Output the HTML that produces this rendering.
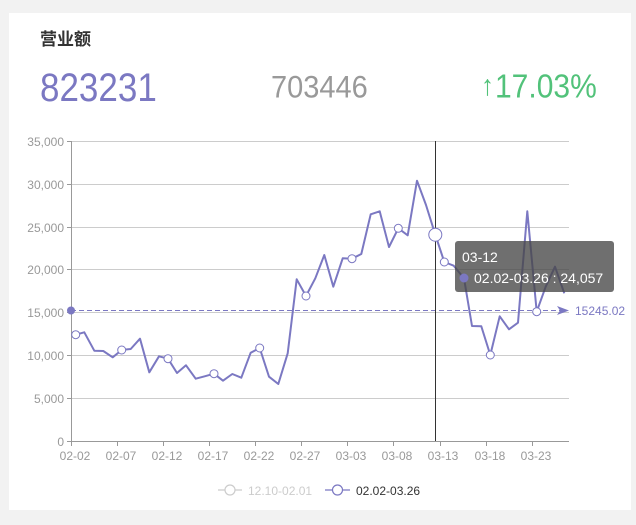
<!DOCTYPE html>
<html><head><meta charset="utf-8"><style>
body{margin:0;width:636px;height:525px;background:#f2f2f2;font-family:"Liberation Sans","Noto Sans CJK SC",sans-serif;overflow:hidden;position:relative}
.card{position:absolute;left:9px;top:13px;width:622px;height:497px;background:#fff}
.t{position:absolute;left:40px;top:25px;font-size:17px;font-weight:bold;color:#333}
.n{position:absolute;white-space:nowrap;line-height:1;transform-origin:0 0}
</style></head><body>
<div class="card"></div>
<div class="t">营业额</div>
<div class="n" style="left:40px;top:68px;font-size:35px;transform:scaleY(1.13);color:#7b78c2">823231</div>
<div class="n" style="left:271px;top:72px;font-size:29px;transform:scaleY(1.1);color:#999">703446</div>
<div class="n" style="left:481px;top:71px;font-size:30px;transform:scaleY(1.1);color:#52c27a"><span style="font-size:26px;position:relative;top:-2px;margin-right:1px">↑</span>17.03%</div>
<svg width="636" height="525" style="position:absolute;left:0;top:0" font-family="Liberation Sans, sans-serif">
<g stroke="#ccc" stroke-width="1">
<line x1="71" x2="569" y1="141.5" y2="141.5"/><line x1="71" x2="569" y1="184.5" y2="184.5"/><line x1="71" x2="569" y1="227.5" y2="227.5"/><line x1="71" x2="569" y1="269.5" y2="269.5"/><line x1="71" x2="569" y1="312.5" y2="312.5"/><line x1="71" x2="569" y1="355.5" y2="355.5"/><line x1="71" x2="569" y1="398.5" y2="398.5"/>
</g>
<g stroke="#999" stroke-width="1"><line x1="71.5" y1="141" x2="71.5" y2="441"/><line x1="71" y1="441.5" x2="569" y2="441.5"/>
<line x1="67" x2="71" y1="141.5" y2="141.5"/><line x1="67" x2="71" y1="184.5" y2="184.5"/><line x1="67" x2="71" y1="227.5" y2="227.5"/><line x1="67" x2="71" y1="269.5" y2="269.5"/><line x1="67" x2="71" y1="312.5" y2="312.5"/><line x1="67" x2="71" y1="355.5" y2="355.5"/><line x1="67" x2="71" y1="398.5" y2="398.5"/><line x1="67" x2="71" y1="441.5" y2="441.5"/>
<line x1="71.5" x2="71.5" y1="441" y2="446"/><line x1="117.5" x2="117.5" y1="441" y2="446"/><line x1="163.5" x2="163.5" y1="441" y2="446"/><line x1="209.5" x2="209.5" y1="441" y2="446"/><line x1="255.5" x2="255.5" y1="441" y2="446"/><line x1="301.5" x2="301.5" y1="441" y2="446"/><line x1="347.5" x2="347.5" y1="441" y2="446"/><line x1="393.5" x2="393.5" y1="441" y2="446"/><line x1="440.5" x2="440.5" y1="441" y2="446"/><line x1="486.5" x2="486.5" y1="441" y2="446"/><line x1="532.5" x2="532.5" y1="441" y2="446"/>
</g>
<g fill="#999" font-size="12" text-anchor="end">
<text x="64" y="146">35,000</text><text x="64" y="189">30,000</text><text x="64" y="232">25,000</text><text x="64" y="274">20,000</text><text x="64" y="317">15,000</text><text x="64" y="360">10,000</text><text x="64" y="403">5,000</text><text x="64" y="446">0</text>
</g>
<g fill="#999" font-size="12" text-anchor="middle">
<text x="75" y="460">02-02</text><text x="121" y="460">02-07</text><text x="167" y="460">02-12</text><text x="213" y="460">02-17</text><text x="259" y="460">02-22</text><text x="305" y="460">02-27</text><text x="351" y="460">03-03</text><text x="397" y="460">03-08</text><text x="443" y="460">03-13</text><text x="490" y="460">03-18</text><text x="536" y="460">03-23</text>
</g>
<line x1="71" y1="310.5" x2="560" y2="310.5" stroke="#7b78c2" stroke-dasharray="5,3"/>
<path d="M557 306 L569 310.5 L557 315 L560 310.5 Z" fill="#7b78c2"/>
<circle cx="71" cy="310.5" r="4" fill="#7b78c2"/>
<text x="575" y="315" font-size="12" fill="#7b78c2">15245.02</text>
<line x1="435.5" y1="141" x2="435.5" y2="441" stroke="#333"/>
<polyline fill="none" stroke="#7b78c2" stroke-width="2" stroke-linejoin="round" points="75.7,334.7 84.3,332.3 94.3,350.7 103.3,351 112.7,357.3 121.7,350 130.7,349 140,338.7 149.3,372.3 159,356.3 168,358.7 177,373 186,365.3 195.7,378.7 204.7,376.3 214,373.7 223,380.7 232.3,374 241.3,377.7 250.7,352.7 259.7,348 269,376.7 278.3,384 287.7,353.3 296.7,279.3 306,296 315.3,278.3 324.3,255 333.3,286.7 342.7,258.3 352,258.7 361.3,254 370.7,214.3 379.7,211.3 389,247 398.3,228.3 407.7,235.3 417,180.7 426,205 435.3,234.7 444.3,262 453.7,265.7 464,278.3 472,326 481.3,326.3 490.3,355 499.7,316.3 509,329.3 518,322.7 527.3,211.3 536.7,311.7 545.7,286.7 555,266.7 564.3,293.3"/>
<g fill="#fff" stroke="#7b78c2" stroke-width="1">
<circle cx="75.7" cy="334.7" r="4"/><circle cx="121.7" cy="350" r="4"/><circle cx="168" cy="358.7" r="4"/><circle cx="214" cy="373.7" r="4"/><circle cx="259.7" cy="348" r="4"/><circle cx="306" cy="296" r="4"/><circle cx="352" cy="258.7" r="4"/><circle cx="398.3" cy="228.3" r="4"/><circle cx="444.3" cy="262" r="4"/><circle cx="490.3" cy="355" r="4"/><circle cx="536.7" cy="311.7" r="4"/>
<circle cx="435.3" cy="234.7" r="6.5"/>
</g>
<rect x="455" y="241" width="159" height="51" rx="3" fill="rgba(70,70,70,0.78)"/>
<text x="462" y="262" font-size="14" fill="#fff">03-12</text>
<circle cx="464" cy="278" r="4.5" fill="#7b78c2"/>
<text x="474" y="283" font-size="14" fill="#fff">02.02-03.26 : 24,057</text>
<g stroke="#ccc" fill="#fff" stroke-width="1.2"><line x1="218" x2="242" y1="490" y2="490"/><circle cx="230" cy="490" r="5"/></g>
<text x="248" y="495" font-size="12" fill="#ccc">12.10-02.01</text>
<g stroke="#7b78c2" fill="#fff" stroke-width="1.2"><line x1="325" x2="350" y1="490" y2="490"/><circle cx="337.5" cy="490" r="5"/></g>
<text x="356" y="495" font-size="12" fill="#333">02.02-03.26</text>
</svg>
</body></html>
